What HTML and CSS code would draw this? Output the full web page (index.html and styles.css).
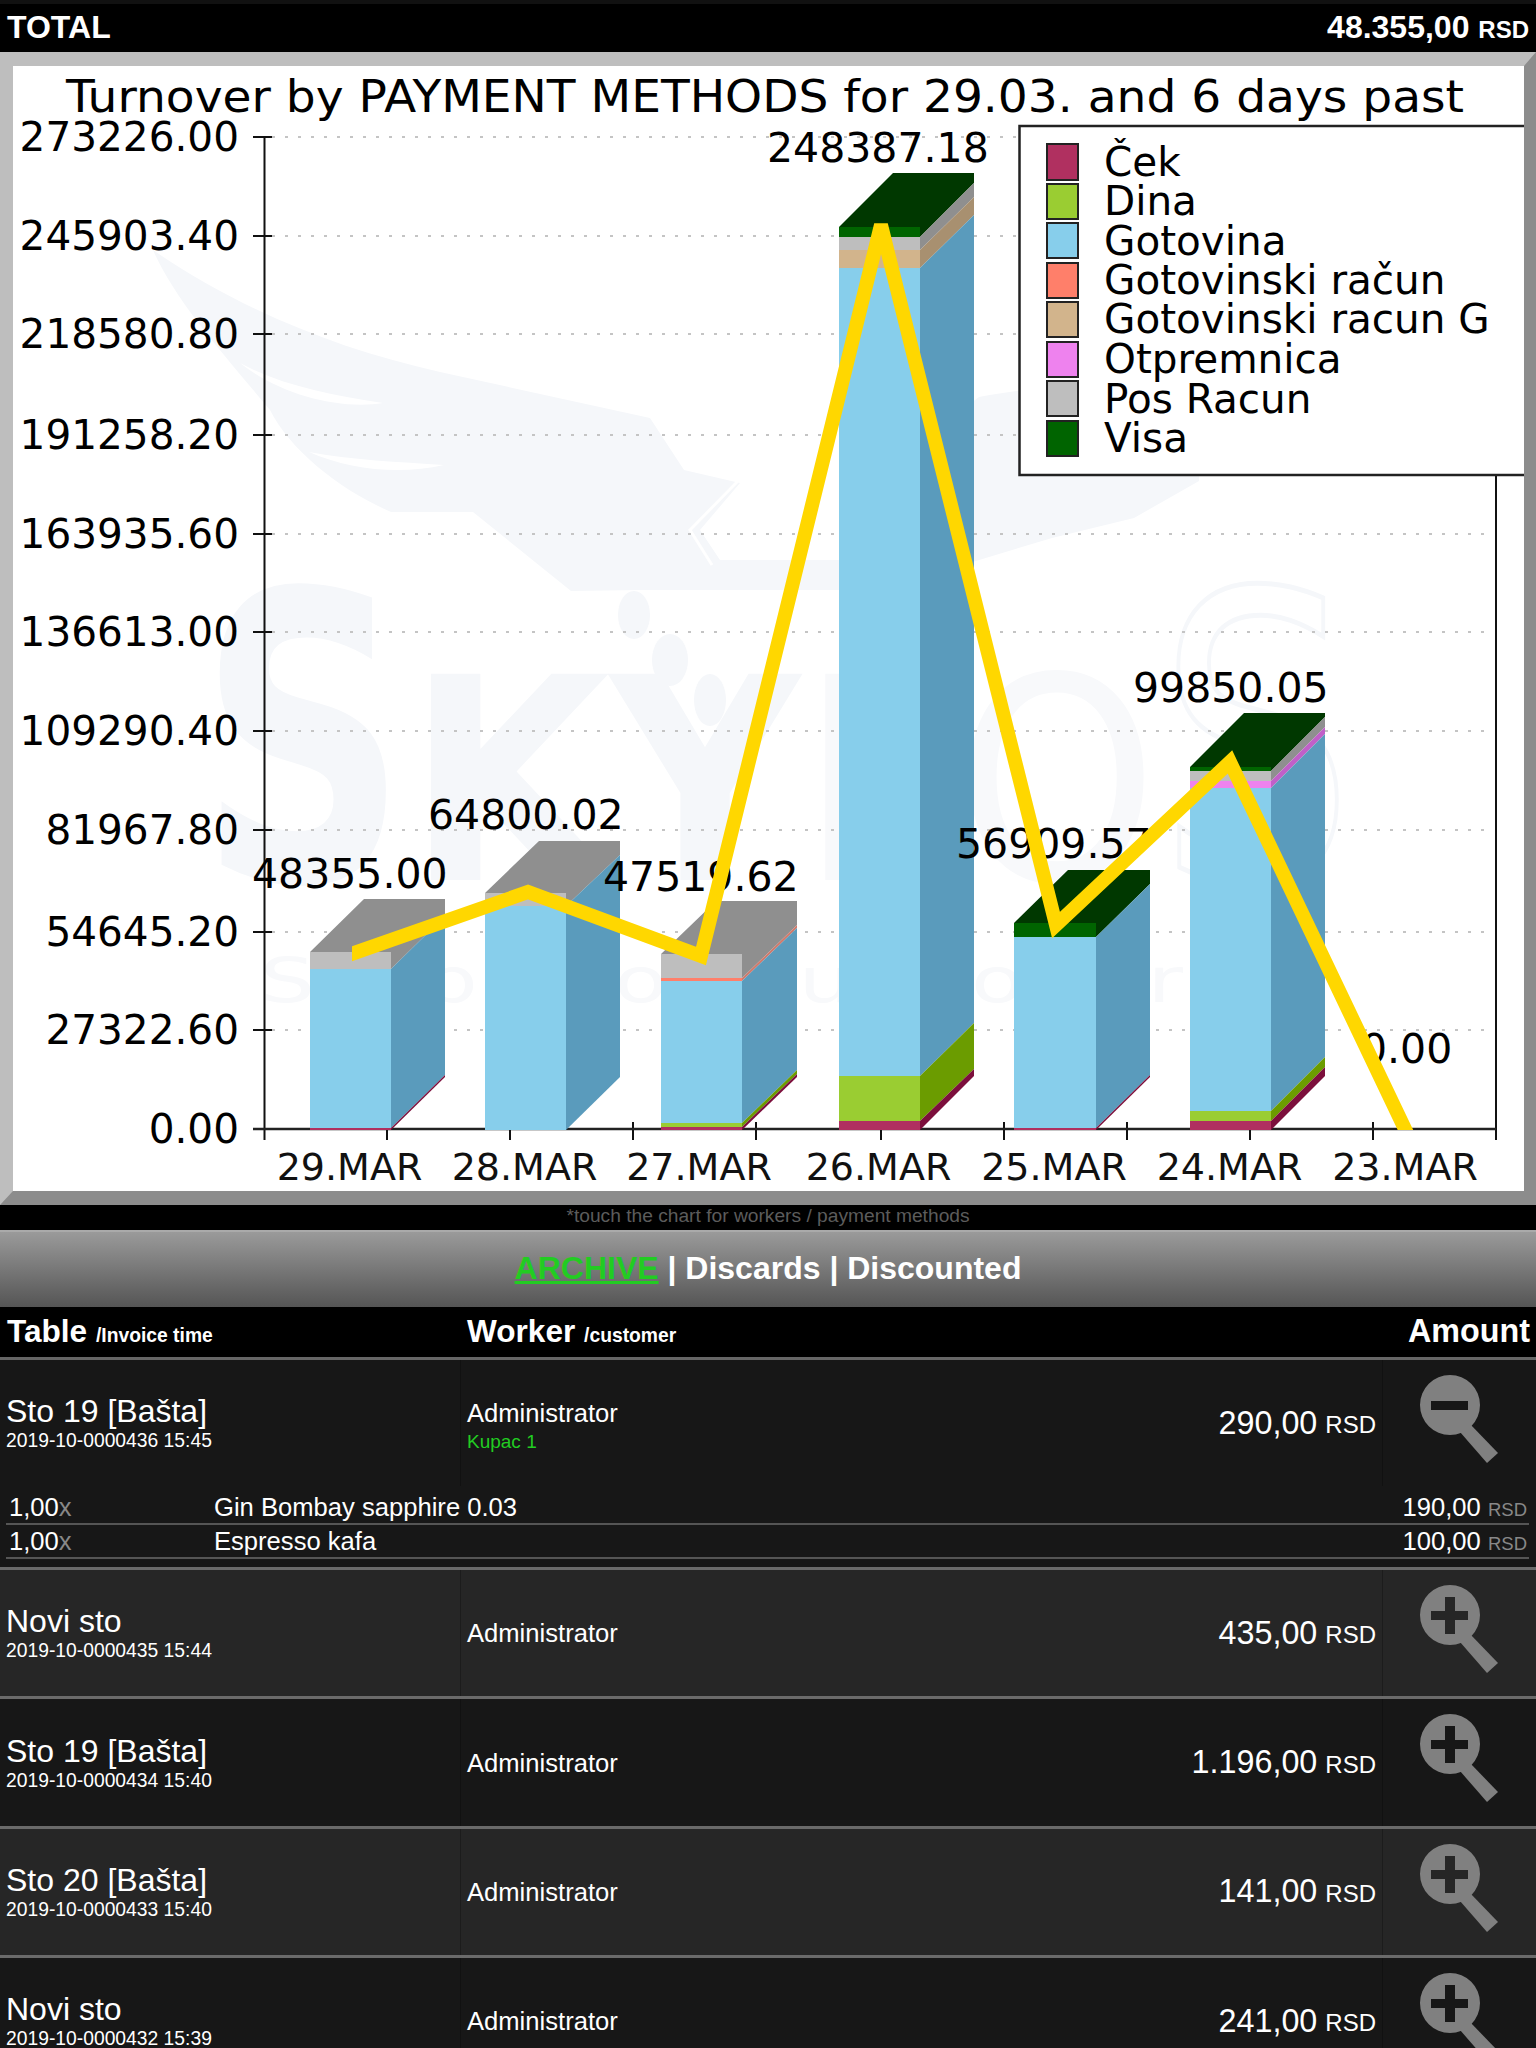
FILE: index.html
```html
<!DOCTYPE html>
<html lang="en">
<head>
<meta charset="utf-8">
<title>Turnover</title>
<link rel="stylesheet" href="styles.css">
</head>
<body>
<svg class="defs" width="0" height="0" aria-hidden="true">
  <symbol id="zoom-in" viewBox="0 0 154 126">
    <path class="mag" fill-rule="evenodd" d="M98 45a30 30 0 1 1-60 0a30 30 0 1 1 60 0zM63 27v14h-14v9h14v14h10v-14h13v-9h-13v-14z"/>
    <polygon class="mag" points="88,64 116,93 105,103 78,72"/>
  </symbol>
  <symbol id="zoom-out" viewBox="0 0 154 126">
    <path class="mag" fill-rule="evenodd" d="M98 45a30 30 0 1 1-60 0a30 30 0 1 1 60 0zM49 41v9h37v-9z"/>
    <polygon class="mag" points="88,64 116,93 105,103 78,72"/>
  </symbol>
</svg>

<header class="total">
  <span>TOTAL</span>
  <span>48.355,00 <small>RSD</small></span>
</header>

<div class="frame">
<svg class="chart" width="1511" height="1125" viewBox="13 66 1511 1125">
  <defs>
    <clipPath id="line-clip"><rect x="352" y="66" width="1172" height="1064"/></clipPath>
  </defs>

  <g class="wm">
    <path d="M153 250C240 310 340 350 440 372L650 418L684 470L740 483L700 530L720 560L860 560L870 480L979 397C1040 385 1130 380 1195 383L1200 440L1199 481L1134 518L1052 538L946 570L860 590L640 590L571 591L473 512L391 512C340 490 290 450 270 410C220 350 175 300 153 250Z"/>
    <path class="wm-cut" d="M240 363C280 395 340 410 383 403C330 395 280 385 240 363Z"/>
    <path class="wm-cut" d="M309 452C350 470 400 475 444 465C400 462 350 460 309 452Z"/>
    <path class="wm-line" d="M738 481L690 530L712 565"/>
    <ellipse cx="634" cy="615" rx="16" ry="24"/>
    <ellipse cx="670" cy="660" rx="18" ry="26"/>
    <ellipse cx="710" cy="700" rx="16" ry="26"/>
    <text class="wm-big" x="199" y="880" textLength="208" lengthAdjust="spacingAndGlyphs">S</text>
    <text class="wm-mid" x="407" y="880" textLength="393" lengthAdjust="spacingAndGlyphs">KY</text>
    <text class="wm-thin" x="800" y="880" textLength="358" lengthAdjust="spacingAndGlyphs">PO</text>
    <text class="wm-ring" x="1158" y="880" textLength="196" lengthAdjust="spacingAndGlyphs">S</text>
    <text class="wm-small" x="260" y="1002" textLength="923" lengthAdjust="spacingAndGlyphs">Simply to your power</text>
  </g>

  <g class="grid">
    <line x1="272" x2="1490" y1="137" y2="137"/>
    <line x1="272" x2="1490" y1="236" y2="236"/>
    <line x1="272" x2="1490" y1="334" y2="334"/>
    <line x1="272" x2="1490" y1="435" y2="435"/>
    <line x1="272" x2="1490" y1="534" y2="534"/>
    <line x1="272" x2="1490" y1="632" y2="632"/>
    <line x1="272" x2="1490" y1="731" y2="731"/>
    <line x1="272" x2="1490" y1="830" y2="830"/>
    <line x1="272" x2="1490" y1="932" y2="932"/>
    <line x1="272" x2="1490" y1="1030" y2="1030"/>
  </g>

  <g class="axis">
    <line x1="264.5" x2="264.5" y1="137" y2="1140"/>
    <line x1="1496" x2="1496" y1="137" y2="1140"/>
    <line x1="253" x2="272" y1="137" y2="137"/>
    <line x1="253" x2="272" y1="236" y2="236"/>
    <line x1="253" x2="272" y1="334" y2="334"/>
    <line x1="253" x2="272" y1="435" y2="435"/>
    <line x1="253" x2="272" y1="534" y2="534"/>
    <line x1="253" x2="272" y1="632" y2="632"/>
    <line x1="253" x2="272" y1="731" y2="731"/>
    <line x1="253" x2="272" y1="830" y2="830"/>
    <line x1="253" x2="272" y1="932" y2="932"/>
    <line x1="253" x2="272" y1="1030" y2="1030"/>
    <line x1="387" x2="387" y1="1122" y2="1140"/>
    <line x1="510" x2="510" y1="1122" y2="1140"/>
    <line x1="633" x2="633" y1="1122" y2="1140"/>
    <line x1="756" x2="756" y1="1122" y2="1140"/>
    <line x1="881" x2="881" y1="1122" y2="1140"/>
    <line x1="1004" x2="1004" y1="1122" y2="1140"/>
    <line x1="1127" x2="1127" y1="1122" y2="1140"/>
    <line x1="1250" x2="1250" y1="1122" y2="1140"/>
    <line x1="1373" x2="1373" y1="1122" y2="1140"/>
    <line x1="1496" x2="1496" y1="1122" y2="1140"/>
    <line class="base" x1="253" x2="1496" y1="1129" y2="1129"/>
  </g>

  <g class="labels y-labels">
    <text x="239" y="151">273226.00</text>
    <text x="239" y="250">245903.40</text>
    <text x="239" y="348">218580.80</text>
    <text x="239" y="449">191258.20</text>
    <text x="239" y="548">163935.60</text>
    <text x="239" y="646">136613.00</text>
    <text x="239" y="745">109290.40</text>
    <text x="239" y="844">81967.80</text>
    <text x="239" y="946">54645.20</text>
    <text x="239" y="1044">27322.60</text>
    <text x="239" y="1143">0.00</text>
  </g>

  <text class="title" x="66" y="112" textLength="1398" lengthAdjust="spacingAndGlyphs">Turnover by PAYMENT METHODS for 29.03. and 6 days past</text>

  <g class="labels x-labels">
    <text x="349.5" y="1180">29.MAR</text>
    <text x="524.5" y="1180">28.MAR</text>
    <text x="699" y="1180">27.MAR</text>
    <text x="878.5" y="1180">26.MAR</text>
    <text x="1054" y="1180">25.MAR</text>
    <text x="1229.5" y="1180">24.MAR</text>
    <text x="1405" y="1180">23.MAR</text>
  </g>

  <!-- 29.MAR -->
  <polygon class="s-pos" points="310,952 364,899 445,899 445,916 391,969 391,952"/>
  <polygon class="s-got" points="391,969 445,916 445,1075 391,1128"/>
  <polygon class="s-cek" points="391,1128 445,1075 445,1077 391,1130"/>
  <rect class="f-pos" x="310" y="952" width="81" height="17"/>
  <rect class="f-got" x="310" y="969" width="81" height="159"/>
  <rect class="f-cek" x="310" y="1128" width="81" height="2"/>

  <!-- 28.MAR -->
  <polygon class="s-pos" points="485,893 539,841 620,841 620,855 566,906 566,893"/>
  <polygon class="s-got" points="566,906 620,855 620,1077 566,1130"/>
  <rect class="f-pos" x="485" y="893" width="81" height="13"/>
  <rect class="f-got" x="485" y="906" width="81" height="224"/>

  <!-- 27.MAR -->
  <polygon class="s-pos" points="661,954 716,901 797,901 797,925 742,978 742,954"/>
  <polygon class="s-sal" points="742,978 797,925 797,928 742,981"/>
  <polygon class="s-got" points="742,981 797,928 797,1070 742,1123"/>
  <polygon class="s-din" points="742,1123 797,1070 797,1074 742,1127"/>
  <polygon class="s-cek" points="742,1127 797,1074 797,1077 742,1130"/>
  <rect class="f-pos" x="661" y="954" width="81" height="24"/>
  <rect class="f-sal" x="661" y="978" width="81" height="3"/>
  <rect class="f-got" x="661" y="981" width="81" height="142"/>
  <rect class="f-din" x="661" y="1123" width="81" height="4"/>
  <rect class="f-cek" x="661" y="1127" width="81" height="3"/>

  <!-- 26.MAR -->
  <polygon class="s-visa" points="839,227 893,173 974,173 974,183 920,237 920,227"/>
  <polygon class="s-pos" points="920,237 974,183 974,197 920,250"/>
  <polygon class="s-tan" points="920,250 974,197 974,215 920,268"/>
  <polygon class="s-got" points="920,268 974,215 974,1023 920,1076"/>
  <polygon class="s-din" points="920,1076 974,1023 974,1069 920,1121"/>
  <polygon class="s-cek" points="920,1121 974,1069 974,1076 920,1130"/>
  <rect class="f-visa" x="839" y="227" width="81" height="10"/>
  <rect class="f-pos" x="839" y="237" width="81" height="13"/>
  <rect class="f-tan" x="839" y="250" width="81" height="18"/>
  <rect class="f-got" x="839" y="268" width="81" height="808"/>
  <rect class="f-din" x="839" y="1076" width="81" height="45"/>
  <rect class="f-cek" x="839" y="1121" width="81" height="9"/>

  <!-- 25.MAR -->
  <polygon class="s-visa" points="1014,923 1068,870 1150,870 1150,884 1096,937 1096,923"/>
  <polygon class="s-got" points="1096,937 1150,884 1150,1075 1096,1128"/>
  <polygon class="s-cek" points="1096,1128 1150,1075 1150,1077 1096,1130"/>
  <rect class="f-visa" x="1014" y="923" width="82" height="14"/>
  <rect class="f-got" x="1014" y="937" width="82" height="191"/>
  <rect class="f-cek" x="1014" y="1128" width="82" height="2"/>

  <!-- 24.MAR -->
  <polygon class="s-visa" points="1190,767 1244,713 1325,713 1325,717 1271,771 1271,767"/>
  <polygon class="s-pos" points="1271,771 1325,717 1325,727 1271,781"/>
  <polygon class="s-pnk" points="1271,781 1325,727 1325,734 1271,788"/>
  <polygon class="s-got" points="1271,788 1325,734 1325,1057 1271,1111"/>
  <polygon class="s-din" points="1271,1111 1325,1057 1325,1067 1271,1121"/>
  <polygon class="s-cek" points="1271,1121 1325,1067 1325,1076 1271,1130"/>
  <rect class="f-visa" x="1190" y="767" width="81" height="4"/>
  <rect class="f-pos" x="1190" y="771" width="81" height="10"/>
  <rect class="f-pnk" x="1190" y="781" width="81" height="7"/>
  <rect class="f-got" x="1190" y="788" width="81" height="323"/>
  <rect class="f-din" x="1190" y="1111" width="81" height="10"/>
  <rect class="f-cek" x="1190" y="1121" width="81" height="9"/>

  <g class="labels values">
    <text x="767" y="162">248387.18</text>
    <text x="428" y="829">64800.02</text>
    <text x="252" y="888">48355.00</text>
    <text x="603" y="891">47519.62</text>
    <text x="956" y="858">56909.57</text>
    <text x="1133" y="702">99850.05</text>
    <text x="1361" y="1063">0.00</text>
  </g>

  <polyline class="trend" clip-path="url(#line-clip)" points="340,958 528,892 701,956 881,225 1056,925 1230,762 1415,1150"/>

  <rect class="legend-box" x="1019.5" y="126" width="506" height="349"/>
  <g class="swatches">
    <rect class="f-cek" x="1047" y="144" width="31" height="36"/>
    <rect class="f-din" x="1047" y="184" width="31" height="35"/>
    <rect class="f-got" x="1047" y="223" width="31" height="35"/>
    <rect class="f-sal" x="1047" y="263" width="31" height="35"/>
    <rect class="f-tan" x="1047" y="302" width="31" height="35"/>
    <rect class="f-pnk" x="1047" y="342" width="31" height="35"/>
    <rect class="f-pos" x="1047" y="381" width="31" height="35"/>
    <rect class="f-visa" x="1047" y="421" width="31" height="35"/>
  </g>
  <g class="labels legend-text">
    <text x="1104" y="176">Ček</text>
    <text x="1104" y="215">Dina</text>
    <text x="1104" y="255">Gotovina</text>
    <text x="1104" y="294">Gotovinski račun</text>
    <text x="1104" y="333">Gotovinski racun G</text>
    <text x="1104" y="373">Otpremnica</text>
    <text x="1104" y="413">Pos Racun</text>
    <text x="1104" y="452">Visa</text>
  </g>
</svg>
</div>

<p class="hint">*touch the chart for workers / payment methods</p>

<nav class="tabs">
  <a class="active" href="#">ARCHIVE</a> | <a href="#">Discards</a> | <a href="#">Discounted</a>
</nav>

<div class="thead">
  <div><b>Table</b> <small>/Invoice time</small></div>
  <div><b>Worker</b> <small>/customer</small></div>
  <div class="amount-head"><b>Amount</b></div>
</div>

<section class="row odd first">
  <div class="cell c-table"><div class="name">Sto 19 [Bašta]</div><div class="sub">2019-10-0000436 15:45</div></div>
  <div class="cell c-worker has-customer"><div>Administrator</div><div class="customer">Kupac 1</div></div>
  <div class="cell c-amount">290,00 <small>RSD</small></div>
  <div class="cell c-icon"><svg class="mag-icon" width="154" height="126"><use href="#zoom-out"/></svg></div>
</section>
<div class="details">
  <div class="item"><span class="qty">1,00<i>x</i></span><span class="item-name">Gin Bombay sapphire 0.03</span><span class="item-price">190,00 <small>RSD</small></span></div>
  <div class="item"><span class="qty">1,00<i>x</i></span><span class="item-name">Espresso kafa</span><span class="item-price">100,00 <small>RSD</small></span></div>
</div>

<section class="row even">
  <div class="cell c-table"><div class="name">Novi sto</div><div class="sub">2019-10-0000435 15:44</div></div>
  <div class="cell c-worker"><div>Administrator</div></div>
  <div class="cell c-amount">435,00 <small>RSD</small></div>
  <div class="cell c-icon"><svg class="mag-icon" width="154" height="126"><use href="#zoom-in"/></svg></div>
</section>

<section class="row odd">
  <div class="cell c-table"><div class="name">Sto 19 [Bašta]</div><div class="sub">2019-10-0000434 15:40</div></div>
  <div class="cell c-worker"><div>Administrator</div></div>
  <div class="cell c-amount">1.196,00 <small>RSD</small></div>
  <div class="cell c-icon"><svg class="mag-icon" width="154" height="126"><use href="#zoom-in"/></svg></div>
</section>

<section class="row even">
  <div class="cell c-table"><div class="name">Sto 20 [Bašta]</div><div class="sub">2019-10-0000433 15:40</div></div>
  <div class="cell c-worker"><div>Administrator</div></div>
  <div class="cell c-amount">141,00 <small>RSD</small></div>
  <div class="cell c-icon"><svg class="mag-icon" width="154" height="126"><use href="#zoom-in"/></svg></div>
</section>

<section class="row odd">
  <div class="cell c-table"><div class="name">Novi sto</div><div class="sub">2019-10-0000432 15:39</div></div>
  <div class="cell c-worker"><div>Administrator</div></div>
  <div class="cell c-amount">241,00 <small>RSD</small></div>
  <div class="cell c-icon"><svg class="mag-icon" width="154" height="126"><use href="#zoom-in"/></svg></div>
</section>
</body>
</html>
```

FILE: styles.css
```css
html, body {
  margin: 0;
  padding: 0;
  background: #000;
  height: 2048px;
  overflow: hidden;
}
body {
  font-family: "Liberation Sans", Arial, sans-serif;
  color: #fff;
}
.defs { position: absolute; }

.total {
  display: flex;
  justify-content: space-between;
  align-items: center;
  box-sizing: border-box;
  height: 52px;
  padding: 0 7px 2px;
  background: #000;
  border-top: 4px solid #111;
  font-size: 32px;
  font-weight: 700;
}
.total small { font-size: 24px; }

.frame {
  height: 1125px;
  border-style: solid;
  border-width: 14px 12px 14px 13px;
  border-color: #bebebe #8c8c8c #8c8c8c #bebebe;
  background: #fff;
}
.chart { display: block; }
.labels text, .title { font-family: "DejaVu Sans", sans-serif; fill: #000; }
.labels text { font-size: 41px; }
.title { font-size: 44px; }
.y-labels text { font-size: 40.6px; text-anchor: end; }
.x-labels text { font-size: 38px; text-anchor: middle; fill: #111; }
.legend-text text { font-size: 40.5px; }
.wm { fill: #f5f7fa; }
.wm-cut { fill: #fff; }
.wm-line { fill: none; stroke: #fff; stroke-width: 3; }
.wm-big { font-family: "DejaVu Sans", sans-serif; font-weight: 700; font-size: 400px; }
.wm-mid { font-family: "DejaVu Sans", sans-serif; font-weight: 700; font-size: 283px; }
.wm-thin { font-family: "DejaVu Sans", sans-serif; font-size: 283px; fill: #f8f9fb; }
.wm-ring { font-family: "DejaVu Sans", sans-serif; font-size: 400px; fill: none; stroke: #f5f7fa; stroke-width: 5; }
.wm-small { font-family: "DejaVu Sans", sans-serif; font-size: 62px; fill: #f8f9fb; }
.grid line { stroke: #c4c4c4; stroke-width: 2; stroke-dasharray: 3 10; }
.axis line { stroke: #111; stroke-width: 2; }
.axis .base { stroke: #222; stroke-width: 2.5; }
.trend { fill: none; stroke: #ffd700; stroke-width: 14; }
.legend-box { fill: #fff; stroke: #222; stroke-width: 2.5; }
.swatches rect { stroke: #222; stroke-width: 2; }

.f-cek { fill: #b03060; }
.f-din { fill: #9acd32; }
.f-got { fill: #87ceeb; }
.f-sal { fill: #ff7f6a; }
.f-tan { fill: #d2b48c; }
.f-pnk { fill: #ee82ee; }
.f-pos { fill: #bebebe; }
.f-visa { fill: #006400; }
.s-cek { fill: #7c0f3c; }
.s-din { fill: #6b9c00; }
.s-got { fill: #5a9bbc; }
.s-sal { fill: #cf7a6c; }
.s-tan { fill: #a89070; }
.s-pnk { fill: #c060c8; }
.s-pos { fill: #8f8f8f; }
.s-visa { fill: #003800; }

.hint {
  margin: 0;
  height: 25px;
  line-height: 22px;
  text-align: center;
  font-size: 19.2px;
  color: #5c5c5c;
  background: #000;
}

.tabs {
  box-sizing: border-box;
  height: 77px;
  border-top: 2px solid #aaa;
  background: linear-gradient(#9a9a9a, #555);
  text-align: center;
  font-size: 32px;
  font-weight: 700;
  line-height: 72px;
}
.tabs a { color: #fff; text-decoration: none; }
.tabs a.active { color: #22cc22; text-decoration: underline; }

.thead {
  display: grid;
  grid-template-columns: 460px 1fr auto;
  box-sizing: border-box;
  height: 53px;
  padding: 0 6px 0 7px;
  background: #000;
  border-bottom: 3px solid #666;
  line-height: 48px;
  font-size: 31.6px;
  font-weight: 700;
}
.thead small { font-size: 19.3px; }
.amount-head { font-size: 32.3px; }

.row {
  display: grid;
  grid-template-columns: 460px 1fr auto 154px;
  height: 126.4px;
  border-bottom: 3px solid #6a6a6a;
}
.row.even { background: #262626; }
.row.odd { background: #171717; }
.row.first { border-bottom: 0; }
.cell { display: flex; flex-direction: column; justify-content: center; }
.c-table { padding: 0 0 1px 6px; }
.name { font-size: 32px; line-height: 36px; margin-bottom: 1px; }
.sub { font-size: 19.3px; line-height: 22px; }
.c-worker {
  padding-left: 6px;
  font-size: 25.6px;
  line-height: 30px;
  border-left: 1px solid rgba(0, 0, 0, 0.25);
}
.c-worker.has-customer { padding-top: 6.5px; }
.customer { font-size: 19px; line-height: 26px; margin-top: 1.3px; color: #22cc22; }
.c-amount {
  flex-direction: row;
  justify-content: flex-end;
  align-items: center;
  gap: 8px;
  padding: 0 6px 0 0;
  box-sizing: border-box;
  font-size: 32.3px;
  white-space: nowrap;
}
.c-amount small { font-size: 24px; margin-top: 4px; }
.c-icon { border-left: 1px solid rgba(0, 0, 0, 0.25); justify-content: flex-start; }
.mag-icon { display: block; margin-left: -1px; }
.mag { fill: #808080; }

.details {
  box-sizing: border-box;
  height: 83.6px;
  padding: 5px 7px 0 6px;
  background: #171717;
  border-bottom: 3px solid #6a6a6a;
}
.item {
  display: grid;
  grid-template-columns: 205px 1fr auto;
  box-sizing: border-box;
  height: 34px;
  padding: 0 0 0 3px;
  border-bottom: 2px solid #555;
  font-size: 25.6px;
  line-height: 33px;
}
.qty i { font-style: normal; color: #888; }
.item-price { padding-right: 2px; }
.item-price small { font-size: 18.5px; color: #888; }
```
